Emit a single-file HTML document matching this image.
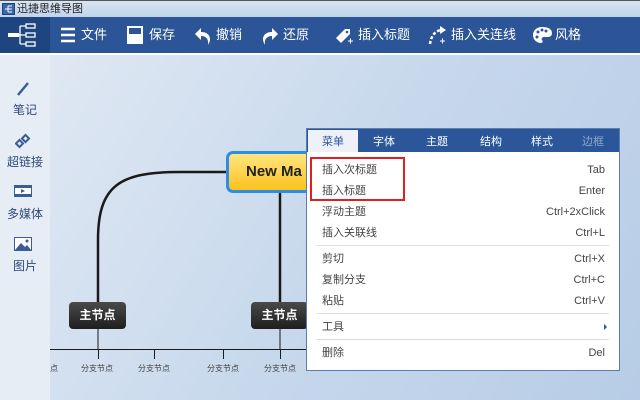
<!DOCTYPE html>
<html><head><meta charset="utf-8"><style>
*{margin:0;padding:0;box-sizing:border-box}
body{width:640px;height:400px;overflow:hidden;position:relative;font-family:"Liberation Sans","Noto Sans CJK SC",sans-serif;background:#c4d5ea}
.abs{position:absolute}
#title{left:0;top:0;width:640px;height:17px;background:linear-gradient(#d9e5f3,#c1d4ea);border-top:1px solid #555;font-size:11px;color:#222;line-height:14px}
#tb{left:0;top:17px;width:640px;height:36px;background:#2b5597}
#logo{left:0;top:17px;width:50px;height:36px;background:#1f4580}
.tbi{top:17px;height:36px;line-height:36px;color:#fff;font-size:13px}
#white{left:0;top:53px;width:640px;height:2px;background:#fff}
#side{left:0;top:55px;width:50px;height:345px;background:#e7edf5}
.si{left:0;width:50px;text-align:center;color:#2d4a7a;font-size:12px}
#canvas{left:50px;top:55px;width:590px;height:345px;background:linear-gradient(120deg,#dfe8f3 0%,#c7d8ec 50%,#b7cce6 100%)}
.mn{width:57px;height:27px;background:linear-gradient(#4a4a4a,#1e1e1e);border-radius:4px;color:#fff;font-size:12px;font-weight:bold;text-align:center;line-height:27px}
.lbl{font-size:8px;color:#444;top:363px}
#menu{left:306px;top:128px;width:314px;height:243px;background:#fff;border:1px solid #5a7cb0}
#tabs{left:0;top:0;width:312px;height:23px;background:#2b579a;font-size:11px;color:#fff}
#tabs span{position:absolute;top:4px}
.it{left:15px;font-size:11px;color:#444;line-height:14px}
.sc{right:14px;font-size:11px;color:#444;line-height:14px}
.sep{left:10px;width:292px;height:1px;background:#ddd}
</style></head><body>
<div id="title" class="abs"><svg class="abs" style="left:2px;top:2px" width="13" height="12"><rect x="0.5" y="0.5" width="12" height="11" fill="#3b66a8" stroke="#1f4580"/><path d="M3 6h3M6 3v6M6 3h4M6 6h4M6 9h4" stroke="#fff"/></svg><span class="abs" style="left:17px;top:1px">迅捷思维导图</span></div>
<div id="tb" class="abs"></div>
<div id="logo" class="abs"><svg width="50" height="36"><g fill="none" stroke="#fff" stroke-width="1.3"><rect x="26" y="7" width="9" height="4"/><rect x="26" y="16" width="9" height="4"/><rect x="26" y="25" width="9" height="4"/><path d="M14 18h12M20 9v18M20 9h6M20 27h6"/></g><rect x="8" y="16" width="11" height="4" fill="#fff"/></svg></div>
<svg class="abs" style="left:60px;top:27px" width="16" height="16"><path d="M1 2h14M1 8h14M1 14h14" stroke="#fff" stroke-width="2.5"/></svg>
<div class="abs tbi" style="left:81px">文件</div>
<svg class="abs" style="left:127px;top:26px" width="16" height="18"><rect x="1" y="1" width="14" height="16" fill="none" stroke="#fff" stroke-width="2"/><rect x="2" y="8" width="12" height="2" fill="#fff"/><rect x="2" y="10" width="12" height="7" fill="#fff"/></svg>
<div class="abs tbi" style="left:149px">保存</div>
<svg class="abs" style="left:195px;top:26px" width="16" height="20"><path d="M6 2L0 8l6 6V10c5 0 8 3 7 9 4-6 2-13-7-13z" fill="#fff"/></svg>
<div class="abs tbi" style="left:216px">撤销</div>
<svg class="abs" style="left:262px;top:28px" width="16" height="20"><path d="M10 0l6 6-6 6V8C5 8 2 11 3 17-1 11 1 4 10 4z" fill="#fff"/></svg>
<div class="abs tbi" style="left:283px">还原</div>
<svg class="abs" style="left:332px;top:24px" width="22" height="22"><path d="M4 14L13 5l5 0 0 5-9 9z" fill="#fff"/><circle cx="15" cy="8" r="1.3" fill="#2b5597"/><path d="M16 17h5M18.5 14.5v5" stroke="#fff"/></svg>
<div class="abs tbi" style="left:358px">插入标题</div>
<svg class="abs" style="left:428px;top:24px" width="22" height="22"><path d="M2 20C3 12 7 7 13 6" fill="none" stroke="#fff" stroke-width="2.5" stroke-dasharray="3 2"/><path d="M12 2l6 4-6 4z" fill="#fff"/><path d="M12 17h5M14.5 14.5v5" stroke="#fff"/></svg>
<div class="abs tbi" style="left:451px">插入关连线</div>
<svg class="abs" style="left:532px;top:26px" width="20" height="18"><path d="M10 1C4 1 1 5 1 9c0 5 4 8 8 8 2 0 2-2 1-3s0-3 2-3h4c3 0 4-2 4-4 0-4-4-6-10-6z" fill="#fff"/><circle cx="6" cy="6" r="1.5" fill="#2b5597"/><circle cx="10" cy="4" r="1.5" fill="#2b5597"/><circle cx="14" cy="5" r="1.5" fill="#2b5597"/><circle cx="5" cy="11" r="1.5" fill="#2b5597"/></svg>
<div class="abs tbi" style="left:555px">风格</div>
<div id="white" class="abs"></div>
<div id="side" class="abs"></div>
<svg class="abs" style="left:16px;top:81px" width="14" height="16"><path d="M2 14L12 2" stroke="#3a5d96" stroke-width="2.5"/></svg>
<div class="abs si" style="top:101px">笔记</div>
<svg class="abs" style="left:15px;top:133px" width="16" height="16"><g fill="none" stroke="#3a5d96" stroke-width="2"><rect x="2" y="8" width="5" height="5" transform="rotate(-45 4.5 10.5)"/><rect x="8" y="3" width="5" height="5" transform="rotate(-45 10.5 5.5)"/></g></svg>
<div class="abs si" style="top:153px">超链接</div>
<svg class="abs" style="left:14px;top:185px" width="18" height="12"><rect x="0.5" y="0.5" width="17" height="11" fill="#fff" stroke="#3a5d96"/><rect x="1" y="1" width="16" height="2" fill="#3a5d96"/><rect x="1" y="9" width="16" height="2" fill="#3a5d96"/><path d="M7 4l4 2-4 2z" fill="#3a5d96"/></svg>
<div class="abs si" style="top:205px">多媒体</div>
<svg class="abs" style="left:14px;top:237px" width="18" height="14"><rect x="0.5" y="0.5" width="17" height="13" fill="#fff" stroke="#3a5d96"/><path d="M1 13l6-7 4 4 2-2 4 5z" fill="#3a5d96"/><circle cx="13" cy="4" r="1.5" fill="#3a5d96"/></svg>
<div class="abs si" style="top:257px">图片</div>
<div id="canvas" class="abs"></div>
<svg class="abs" style="left:0;top:0" width="640" height="400"><g fill="none" stroke="#1a1a1a"><path d="M226 172H180C120 172 98 185 98 240V302" stroke-width="2.5"/><path d="M280 193V302" stroke-width="2.5"/><path d="M98 329V350M280 329V350" stroke-width="1"/><path d="M50 349.5H306" stroke-width="1"/><path d="M154.5 349v10M223.5 349v10M280.5 349v10M98.5 349v10" stroke-width="1"/></g></svg>
<div class="abs" style="left:226px;top:151px;width:90px;height:42px;border:3px solid #2b8ee6;border-radius:7px;background:linear-gradient(#ffe680,#fcc21d);font-weight:bold;font-size:15px;color:#222;line-height:36px;padding-left:17px">New Ma</div>
<div class="abs mn" style="left:69px;top:302px">主节点</div>
<div class="abs mn" style="left:251px;top:302px">主节点</div>
<div class="abs lbl" style="left:50px">点</div>
<div class="abs lbl" style="left:81px">分支节点</div>
<div class="abs lbl" style="left:138px">分支节点</div>
<div class="abs lbl" style="left:207px">分支节点</div>
<div class="abs lbl" style="left:264px">分支节点</div>
<div id="menu" class="abs">
<div id="tabs" class="abs"><div class="abs" style="left:1px;top:1px;width:50px;height:22px;background:#eef2f8"></div><span style="left:15px;color:#2b579a">菜单</span><span style="left:66px">字体</span><span style="left:119px">主题</span><span style="left:173px">结构</span><span style="left:224px">样式</span><span style="left:275px;color:#8fa6cc">边框</span></div>
<div class="abs" style="left:3px;top:28px;width:95px;height:44px;border:2px solid #e02020"></div>
<div class="abs it" style="top:34px">插入次标题</div><div class="abs sc" style="top:34px">Tab</div>
<div class="abs it" style="top:55px">插入标题</div><div class="abs sc" style="top:55px">Enter</div>
<div class="abs it" style="top:76px">浮动主题</div><div class="abs sc" style="top:76px">Ctrl+2xClick</div>
<div class="abs it" style="top:97px">插入关联线</div><div class="abs sc" style="top:97px">Ctrl+L</div>
<div class="abs sep" style="top:116px"></div>
<div class="abs it" style="top:123px">剪切</div><div class="abs sc" style="top:123px">Ctrl+X</div>
<div class="abs it" style="top:144px">复制分支</div><div class="abs sc" style="top:144px">Ctrl+C</div>
<div class="abs it" style="top:165px">粘贴</div><div class="abs sc" style="top:165px">Ctrl+V</div>
<div class="abs sep" style="top:184px"></div>
<div class="abs it" style="top:191px">工具</div><div class="abs" style="right:12px;top:195px;border-left:3px solid #2b579a;border-top:3px solid transparent;border-bottom:3px solid transparent"></div>
<div class="abs sep" style="top:210px"></div>
<div class="abs it" style="top:217px">删除</div><div class="abs sc" style="top:217px">Del</div>
</div>
</body></html>
